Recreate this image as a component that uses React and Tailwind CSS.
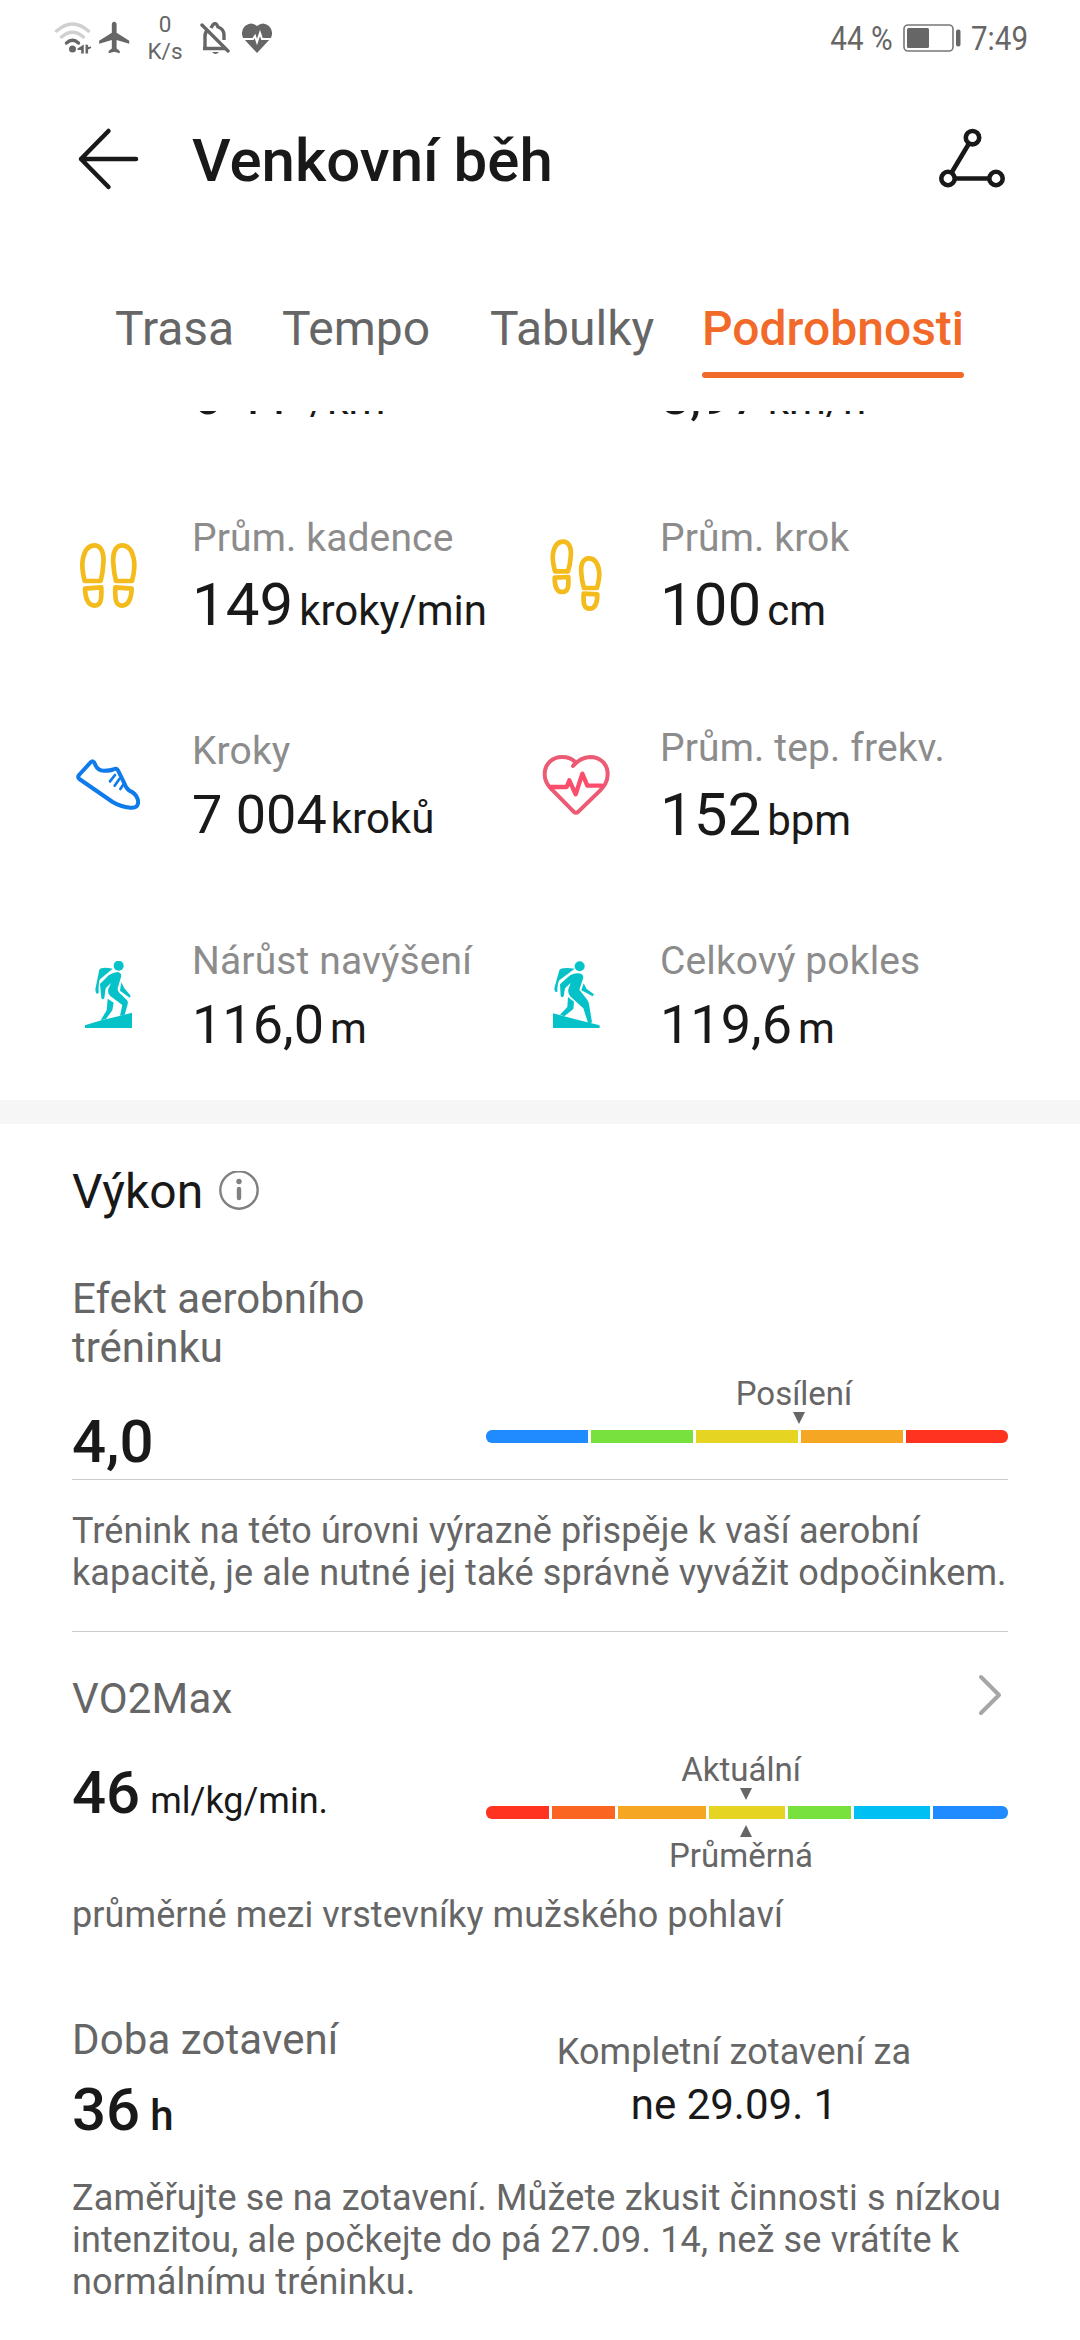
const aerobicZones = [
  { color: "bg-[#1f8bff]", width: "w-[102px]" },
  { color: "bg-[#78e13d]", width: "w-[102px]" },
  { color: "bg-[#e6d422]", width: "w-[102px]" },
  { color: "bg-[#f5a623]", width: "w-[102px]" },
  { color: "bg-[#ff3320]", width: "w-[102px]" },
];

const vo2Zones = [
  { color: "bg-[#ff3320]", width: "w-[63px]" },
  { color: "bg-[#fa6522]", width: "w-[63px]" },
  { color: "bg-[#f5a623]", width: "w-[88px]" },
  { color: "bg-[#e6d422]", width: "w-[76px]" },
  { color: "bg-[#78e13d]", width: "w-[63px]" },
  { color: "bg-[#00bff3]", width: "w-[76px]" },
  { color: "bg-[#1f8bff]", width: "w-[75px]" },
];

const StatusBar = () => (
  <div className="flex h-[75px] items-center pl-[54px] pr-[52px] text-[#666666]">
    <svg className="h-8 w-10" viewBox="0 0 40 32" fill="none" strokeLinecap="round">
      <path d="M2.500 9Q18.500 -5 34.500 9" stroke="#d0d0d0" strokeWidth="3.400" />
      <path d="M7.500 15Q18.500 5.500 29.500 15" stroke="#d0d0d0" strokeWidth="3.400" />
      <path d="M12.500 21Q18.500 15.500 24.500 21" stroke="#666" strokeWidth="3.400" />
      <circle cx="18.500" cy="27" r="3.500" fill="#666" />
      <path d="M29.800 22.500V31.500h-2.600v-3.500L23.500 28v-1.500zM31.500 22.500V31.500h2.600v-4l3-1.500v-1.500l-3 .5v-2z" fill="#666" />
    </svg>
    <svg className="ml-[2px] h-[39px] w-[38px]" viewBox="0 0 24 24" fill="#666">
      <path d="M21 16v-2l-8-5V3.500c0-.83-.67-1.500-1.500-1.500S10 2.670 10 3.500V9l-8 5v2l8-2.500V19l-2 1.500V22l3.500-1 3.500 1v-1.500L13 19v-5.500l8 2.500z" />
    </svg>
    <div className="ml-3 w-[38px] text-center text-[22.5px] leading-[27px]">
      <div>0</div>
      <div>K/s</div>
    </div>
    <svg className="ml-[16px] h-8 w-8" viewBox="0 0 32 32" fill="none" stroke="#666" strokeWidth="3.400">
      <path d="M3 26.500H25M5 26.500V14Q5 10 8 8M11 6Q15 -2.500 18 5Q24 7 24 13V18" />
      <path d="M2 3L28 29" strokeLinecap="round" />
      <path d="M12 30h7q-3.500 4-7 0z" fill="#666" stroke="none" />
    </svg>
    <svg className="ml-[9px] h-8 w-8 overflow-visible" viewBox="0 0 32 32">
      <path d="M16 4Q10-1 4 4Q-1 9 2 16L16 31L30 16Q33 9 28 4Q22-1 16 4Z" fill="#666" />
      <path d="M1 17H12L14 14L16 20L19 11L21 17H31" fill="none" stroke="#fff" strokeWidth="2" />
    </svg>
    <div className="ml-auto flex items-center text-[34px] leading-10">
      <span className="origin-right scale-x-[0.87]">44 %</span>
      <svg className="ml-[10px] h-7 w-[59px]" viewBox="0 0 59 28">
        <rect x="1" y="1" width="49" height="26" rx="4" fill="none" stroke="#777" strokeWidth="1.600" />
        <rect x="4" y="4" width="22" height="20" rx="1.500" fill="#666" />
        <rect x="53" y="5.500" width="4.500" height="17" rx="2" fill="#666" />
      </svg>
      <span className="ml-[9px] w-[57px] origin-left scale-x-[0.87]">7:49</span>
    </div>
  </div>
);

const Header = () => (
  <div className="flex h-[168px] items-center px-[72px]">
    <svg className="h-[72px] w-[72px]" viewBox="0 0 72 72" fill="none" stroke="#191919" strokeWidth="4.500" strokeLinecap="round" strokeLinejoin="round">
      <path d="M64 36H9M36.500 8L9 36L36.500 64" />
    </svg>
    <h1 className="ml-12 pt-1 text-[60px] leading-[70px] font-medium text-[#191919]">Venkovní běh</h1>
    <svg className="ml-auto h-[72px] w-[72px]" viewBox="0 0 72 72" fill="none" stroke="#191919" strokeWidth="4.600">
      <circle cx="36.500" cy="14.700" r="6.700" />
      <circle cx="12" cy="55.500" r="6.700" />
      <circle cx="60" cy="55.500" r="6.700" />
      <path d="M33 20.500L15.500 49.700M18.700 55.500H53.300" />
    </svg>
  </div>
);

const Tabs = () => (
  <div className="flex h-[168px] items-start pt-[58px] text-[48px] leading-[56px] text-[#666666]">
    <div className="ml-[115px] w-[167px]">Trasa</div>
    <div className="w-[208px]">Tempo</div>
    <div className="w-[212px]">Tabulky</div>
    <div className="w-[262px] font-medium whitespace-nowrap text-[#f26a2a]">
      Podrobnosti
      <div className="mt-[15px] h-1.5 rounded-full bg-[#f26a2a]" />
    </div>
  </div>
);

const CadenceIcon = () => (
  <svg className="h-[72px] w-[72px] shrink-0" viewBox="0 0 216 216" fill="none" stroke="#f4bb1c" strokeWidth="14" strokeLinejoin="round">
    <path d="M38 120C30 90 29 70 33 52C39 24 52 13 68 13C88 13 97 38 94 68C93 90 90 105 86 120Z" />
    <path d="M39 143L88 139C89 172 88 194 68 194C48 193 40 172 39 143Z" />
    <g transform="translate(218 0) scale(-1 1)">
      <path d="M38 120C30 90 29 70 33 52C39 24 52 13 68 13C88 13 97 38 94 68C93 90 90 105 86 120Z" />
      <path d="M39 143L88 139C89 172 88 194 68 194C48 193 40 172 39 143Z" />
    </g>
  </svg>
);

const StepIcon = () => (
  <svg className="h-[72px] w-[72px] shrink-0 overflow-visible" viewBox="0 0 216 216" fill="none" stroke="#f4bb1c" strokeWidth="14" strokeLinejoin="round">
    <path d="M45 91C38 65 36 55 39 38C43 15 54 2 69 2C88 2 95 22 92 48C91 65 88 78 84 91Z" />
    <path d="M44 110L85 108C86 135 86 153 67 153C50 153 44 135 44 110Z" />
    <g transform="translate(216 50) scale(-1 1)">
      <path d="M45 91C38 65 36 55 39 38C43 15 54 2 69 2C88 2 95 22 92 48C91 65 88 78 84 91Z" />
      <path d="M44 110L85 108C86 135 86 153 67 153C50 153 44 135 44 110Z" />
    </g>
  </svg>
);

const ShoeIcon = () => (
  <svg className="h-[72px] w-[72px] shrink-0" viewBox="0 0 216 216" fill="none" stroke="#0f7bea" strokeWidth="12" strokeLinecap="round" strokeLinejoin="round">
    <path d="M62 31Q68 33 70 42Q78 60 97 59Q115 59 124 55Q134 50 138 58L156 95Q162 112 172 119Q190 126 196 142Q201 154 196 163Q192 171 175 170Q145 167 122 153L22 84Q16 79 21 72L53 37Q58 31 62 31Z" />
    <path d="M129 72L114 91M142 84L128 104M155 99L145 114" strokeWidth="8" />
  </svg>
);

const HeartIcon = () => (
  <svg className="h-[72px] w-[72px] shrink-0" viewBox="0 0 216 216" fill="none" stroke="#ec5a74" strokeWidth="12" strokeLinecap="round" strokeLinejoin="round">
    <path d="M99 45Q120 20 150 18C180 18 203 38 203 70C203 95 190 108 180 119L115 182Q108 188 101 182L36 116C22 103 14 90 14 70C14 40 36 18 66 18Q90 18 105 32" />
    <path d="M32 108L80 108L88 88L107 130L127 68L142 104L186 104" stroke="#fb4e6c" strokeWidth="13" />
  </svg>
);

const AscentIcon = () => (
  <svg className="h-[72px] w-[72px] shrink-0" viewBox="0 0 216 216" fill="#05c1c8">
    <circle cx="140" cy="14" r="15" />
    <path d="M82 26Q88 17 122 23L84 55Q79 62 80 95Q72 105 70 85Z" />
    <path d="M84 69L110 43Q125 34 135 33Q150 34 147 48L137 82Q136 92 150 103L165 118Q169 122 167 130L158 161L144 164L151 132L115 105Q106 97 109 84L117 66L101 82L97 112Q91 118 88 110Z" />
    <path d="M148 64L157 82L176 104L173 110L144 89Z" />
    <path d="M107 113L125 125L121 148L102 174L86 178L104 148Z" />
    <path d="M39 193L88 178L130 168L180 155V201H39Z" />
  </svg>
);

const DescentIcon = () => (
  <svg className="h-[72px] w-[72px] shrink-0" viewBox="0 0 216 216" fill="#05c1c8">
    <circle cx="119" cy="16" r="15" />
    <path d="M58 28Q64 17 104 23L58 58Q52 66 52 92Q44 97 43 82Z" />
    <path d="M60 70L85 47Q100 37 112 37Q130 37 130 50L118 86L140 114Q147 122 148 135L156 184L145 188L130 142L92 107Q83 99 85 85L92 66L75 82L71 106Q65 113 62 104Z" />
    <path d="M131 67L140 84L162 100L158 106L124 88Z" />
    <path d="M84 108L102 122L100 144L73 166L60 161L82 138Z" />
    <path d="M39 157L118 178L176 192Q182 195 178 201H39Z" />
  </svg>
);

const Stat = ({ icon, label, value, unit, big, gap = "gap-1.5" }) => (
  <div className="flex h-[210px] items-center gap-12">
    {icon}
    <div className="whitespace-nowrap">
      <div className="text-[39px] leading-[46px] tracking-[0.13px] text-[#8c8c8c]">{label}</div>
      <div className={`mt-[9px] flex items-baseline text-[#191919] ${gap}`}>
        <span className={big ? "text-[60px] leading-[70px]" : "text-[54px] leading-[63px]"}>{value}</span>
        <span className="text-[42px] leading-[48px]">{unit}</span>
      </div>
    </div>
  </div>
);

// Bottom edge of the row that is scrolled under the tabs
const CutValue = ({ value, unit, gap }) => (
  <div className="flex h-[61px] items-end pb-[45px] pl-[120px] text-[#191919]">
    <div className={`flex items-baseline ${gap}`}>
      <span className="text-[54px] leading-[63px]">{value}</span>
      <span className="text-[42px] leading-[48px]">{unit}</span>
    </div>
  </div>
);

const ZoneBar = ({ zones }) => (
  <div className="flex h-[13px] gap-[3px] overflow-hidden rounded-[6px]">
    {zones.map((zone, i) => (
      <div key={i} className={`${zone.color} ${zone.width}`} />
    ))}
  </div>
);

const Pointer = ({ up, className }) => (
  <svg className={`h-3 w-3 ${className}`} viewBox="0 0 12 12" fill="#666">
    <path d={up ? "M0 12H12L6 0Z" : "M0 0H12L6 12Z"} />
  </svg>
);

const App = () => {
  return (
    <div className="h-[2340px] w-[1080px] overflow-hidden bg-white font-['Roboto',sans-serif] text-[#666666]">
      <StatusBar />
      <Header />
      <Tabs />

      {/* Scrolled list of metrics */}
      <div className="h-[689px] overflow-hidden">
        <div className="grid grid-cols-[468px_468px] px-[72px]">
          <CutValue value={"6'41\""} unit="/km" gap="gap-0" />
          <CutValue value="8,97" unit="km/h" gap="gap-1.5" />
          <Stat icon={<CadenceIcon />} label="Prům. kadence" value="149" unit="kroky/min" big />
          <Stat icon={<StepIcon />} label="Prům. krok" value="100" unit="cm" big />
          <Stat icon={<ShoeIcon />} label="Kroky" value="7 004" unit="kroků" gap="gap-1" />
          <Stat icon={<HeartIcon />} label="Prům. tep. frekv." value="152" unit="bpm" big />
          <Stat icon={<AscentIcon />} label="Nárůst navýšení" value="116,0" unit="m" />
          <Stat icon={<DescentIcon />} label="Celkový pokles" value="119,6" unit="m" />
        </div>
      </div>

      <div className="h-6 bg-[#f6f6f6]" />

      <div className="px-[72px] pt-[39px]">
        <div className="flex h-[56px] items-center gap-4">
          <h2 className="pt-0.5 text-[48px] leading-[56px] text-[#191919]">Výkon</h2>
          <svg className="h-10 w-10" viewBox="0 0 40 40" fill="none" stroke="#808080">
            <circle cx="20" cy="19" r="18.700" strokeWidth="2.400" />
            <circle cx="20" cy="10.500" r="2.700" fill="#808080" stroke="none" />
            <path d="M20 18V27" strokeWidth="4.400" strokeLinecap="round" />
          </svg>
        </div>

        {/* Aerobní efekt */}
        <div className="mt-[55px] flex h-[205px] justify-between">
          <div>
            <div className="w-[330px] text-[42px] leading-[49px]">Efekt aerobního tréninku</div>
            <div className="mt-[35px] text-[60px] leading-[70px] font-medium text-[#191919]">4,0</div>
          </div>
          <div className="w-[522px] pt-[100px]">
            <div className="ml-[208px] w-[200px] text-center text-[33px] leading-[39px]">Posílení</div>
            <Pointer className="-mt-px mb-1.5 ml-[307px]" />
            <ZoneBar zones={aerobicZones} />
          </div>
        </div>
        <div className="h-px bg-[#cccccc]" />
        <p className="mt-[30px] text-[36px] leading-[42px] tracking-[0.12px] whitespace-nowrap">
          Trénink na této úrovni výrazně přispěje k vaší aerobní
          <br />
          kapacitě, je ale nutné jej také správně vyvážit odpočinkem.
        </p>
        <div className="mt-[37px] h-px bg-[#cccccc]" />

        {/* VO2Max */}
        <div className="mt-[42px] flex h-[76px] items-start justify-between">
          <div className="text-[42px] leading-[49px] tracking-[0.2px]">VO2Max</div>
          <svg className="h-[42px] w-[30px]" viewBox="0 0 30 42" fill="none" stroke="#a6a6a6" strokeWidth="4" strokeLinecap="round" strokeLinejoin="round">
            <path d="M3 3L21 21L3 39" />
          </svg>
        </div>
        <div className="flex h-[144px] justify-between">
          <div className="flex h-[70px] items-baseline gap-2.5 pt-[8px] text-[#191919]">
            <span className="text-[60px] leading-[70px] font-medium">46</span>
            <span className="text-[36px]">ml/kg/min.</span>
          </div>
          <div className="w-[522px]">
            <div className="ml-[155px] w-[200px] text-center text-[33px] leading-[39px]">Aktuální</div>
            <Pointer className="-mt-px mb-1.5 ml-[254px]" />
            <ZoneBar zones={vo2Zones} />
            <Pointer up className="mt-1.5 ml-[254px]" />
            <div className="-mt-px ml-[155px] w-[200px] text-center text-[33px] leading-[39px]">Průměrná</div>
          </div>
        </div>
        <p className="text-[36px] leading-[42px] tracking-[0.08px]">průměrné mezi vrstevníky mužského pohlaví</p>

        {/* Doba zotavení */}
        <div className="mt-[79px] flex h-[162px] justify-between">
          <div>
            <div className="text-[42px] leading-[49px] tracking-[0.1px]">Doba zotavení</div>
            <div className="mt-[11px] flex items-baseline gap-2.5 font-medium text-[#191919]">
              <span className="text-[60px] leading-[70px]">36</span>
              <span className="text-[42px] leading-[49px]">h</span>
            </div>
          </div>
          <div className="w-[548px] pt-[16px] text-center">
            <div className="text-[36px] leading-[42px] tracking-[0.1px]">Kompletní zotavení za</div>
            <div className="mt-[7px] text-[42px] leading-[49px] text-[#191919]">ne 29.09. 1</div>
          </div>
        </div>
        <p className="text-[36px] leading-[42px] tracking-[0.15px] whitespace-nowrap">
          Zaměřujte se na zotavení. Můžete zkusit činnosti s nízkou
          <br />
          intenzitou, ale počkejte do pá 27.09. 14, než se vrátíte k
          <br />
          normálnímu tréninku.
        </p>
      </div>
    </div>
  );
};

export default App;
